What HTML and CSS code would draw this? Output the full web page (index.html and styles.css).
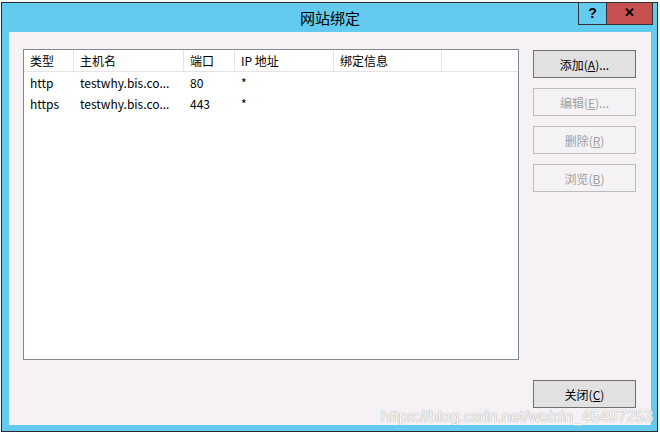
FILE: index.html
```html
<!DOCTYPE html>
<html>

<head>
  <title>网站绑定</title>
  <link rel="stylesheet" href="styles.css">
</head>

<body>
  <div class="window">
    <div class="titlebar">
      <div class="title">网站绑定</div>
      <div class="caption">
        <div class="cap-btn help">?</div>
        <div class="cap-btn close">&#x2715;</div>
      </div>
    </div>

    <div class="client">
      <div class="main">
        <div class="listbox">
          <div class="row head">
            <div class="cell c1">类型</div>
            <div class="cell c2">主机名</div>
            <div class="cell c3">端口</div>
            <div class="cell c4">IP 地址</div>
            <div class="cell c5">绑定信息</div>
          </div>
          <div class="row">
            <div class="cell c1">http</div>
            <div class="cell c2">testwhy.bis.co...</div>
            <div class="cell c3">80</div>
            <div class="cell c4">*</div>
            <div class="cell c5"></div>
          </div>
          <div class="row">
            <div class="cell c1">https</div>
            <div class="cell c2">testwhy.bis.co...</div>
            <div class="cell c3">443</div>
            <div class="cell c4">*</div>
            <div class="cell c5"></div>
          </div>
        </div>

        <div class="side">
          <button class="btn">添加(<u>A</u>)...</button>
          <button class="btn" disabled>编辑(<u>E</u>)...</button>
          <button class="btn" disabled>删除(<u>R</u>)</button>
          <button class="btn" disabled>浏览(<u>B</u>)</button>
        </div>
      </div>

      <div class="footer">
        <button class="btn">关闭(<u>C</u>)</button>
      </div>

      <div class="watermark">https://blog.csdn.net/weixin_45497253</div>
    </div>
  </div>
</body>

</html>
```

FILE: styles.css
```css
body {
  margin: 0;
  background: #ffffff;
  font-family: "Noto Sans CJK SC", "Noto Sans", sans-serif;
  font-size: 12px;
  color: #000;
}

.window {
  margin: 2px 0 0 1px;
  width: 657px;
  height: 430px;
  box-sizing: border-box;
  border: 1px solid #2b2b2b;
  background: #62cbef;
}

.titlebar {
  height: 29px;
  position: relative;
}

.title {
  text-align: center;
  font-size: 15px;
  line-height: 29px;
  padding-left: 1px;
}

.caption {
  position: absolute;
  top: -1px;
  right: 4px;
  display: flex;
}

.cap-btn {
  height: 21px;
  border: 1px solid #333;
  text-align: center;
  font-weight: bold;
  line-height: 20px;
  font-family: "Liberation Sans", sans-serif;
}

.help {
  width: 27px;
  font-size: 14px;
  border-right: none;
}

.close {
  width: 45px;
  background: #c75050;
  font-size: 13px;
}

.client {
  position: relative;
  margin-left: 7px;
  width: 642px;
  height: 393px;
  box-sizing: border-box;
  background: #f5f1f5;
  padding: 17px 15px 0 14px;
}

.main {
  display: flex;
  gap: 14px;
}

.listbox {
  width: 496px;
  height: 311px;
  box-sizing: border-box;
  border: 1px solid #828790;
  background: #fff;
}

.row {
  display: flex;
  height: 21px;
  line-height: 21px;
}

.row.head {
  height: 22px;
  line-height: 21px;
  border-bottom: 1px solid #e5e5e5;
  box-sizing: border-box;
}

.cell {
  box-sizing: border-box;
  padding-left: 6px;
  white-space: nowrap;
  overflow: hidden;
}

.head .cell {
  border-right: 1px solid #e5e5e5;
}

.c1 { width: 50px; }
.c2 { width: 110px; }
.c3 { width: 51px; }
.c4 { width: 99px; }
.c5 { width: 108px; }

.side {
  display: flex;
  flex-direction: column;
  gap: 10px;
  padding-top: 1px;
}

.btn {
  width: 103px;
  height: 28px;
  box-sizing: border-box;
  border: 1px solid #707070;
  background: #e1e1e1;
  font-family: "Noto Sans CJK SC", "Noto Sans", sans-serif;
  font-size: 12px;
  color: #000;
  padding: 0;
}

.btn:disabled {
  border-color: #bcbcbc;
  background: #f4f2f5;
  color: #a0a0a0;
}

.footer {
  display: flex;
  justify-content: flex-end;
  margin-top: 20px;
}

.watermark {
  position: absolute;
  left: 372px;
  top: 376px;
  line-height: 18px;
  white-space: nowrap;
  font-family: "Liberation Sans", sans-serif;
  font-size: 16px;
  color: #fbfafb;
  text-shadow: 0 0 1px #a0a0a0, 0 0 1px #b0b0b0;
}
```
